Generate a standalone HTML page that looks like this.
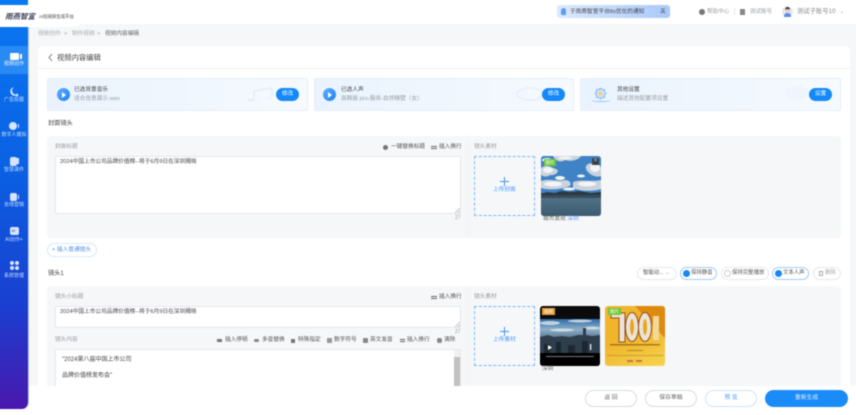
<!DOCTYPE html>
<html lang="zh">
<head>
<meta charset="utf-8">
<style>
html,body{margin:0;padding:0;width:856px;height:409px;overflow:hidden;background:#fff}
*{box-sizing:border-box}
#r{position:absolute;left:-6px;top:-6px;width:868px;height:421px;overflow:hidden;background:#fff;font-family:"Liberation Sans","Noto Sans CJK SC",sans-serif;font-size:5.7px;color:#555;filter:blur(.4px)}
#r div,#r span.t,#r svg{position:absolute}
#i{left:6px;top:6px;width:856px;height:409px}
.t{position:absolute;white-space:nowrap;line-height:8px}
.g{color:#9a9da3}
.d{color:#444}
.card{top:78px;height:33px;background:linear-gradient(90deg,#eaf3fd,#f6faff);border:1px solid #e6eef8;border-radius:2px}
.pbtn{top:88px;width:23px;height:13px;border-radius:7px;background:#1389fb;color:#fff;text-align:center;line-height:13px;font-size:5.7px}
.play{top:88px;width:13px;height:13px;border-radius:50%;background:linear-gradient(135deg,#62aefc,#1d80f0)}
.play:after{content:"";position:absolute;left:5px;top:3.5px;border-left:4px solid #fff;border-top:3px solid transparent;border-bottom:3px solid transparent}
.panel{left:47px;width:794px;background:#f5f7f9;border-radius:4px}
.ta{background:#fff;border:1px solid #e4e6ea;border-radius:1px}
.up{border:1px dashed #7ab6fb;border-radius:1px}
.side{left:0;width:28px;text-align:center;color:#c7dcff;font-size:5px;line-height:6px}
.ic{background:#d5e4ff;border-radius:2px}
.fb{top:390px;height:17px;border-radius:9px;border:1px solid #d9dbdf;background:#fff;text-align:center;line-height:15px;font-size:5.8px;color:#666}
.pill{top:267px;height:13px;border-radius:7px;background:#fff;border:1px solid #e6e8eb;line-height:11px;font-size:5.4px;color:#555;white-space:nowrap}
.chk{top:2px;left:2px;width:7px;height:7px;border-radius:50%;background:#1b86f2}
</style>
</head>
<body>
<div id="r"><div id="i">
  <!-- background content -->
  <div style="left:29px;top:24px;width:839px;height:362px;background:#f5f7f9"></div>

  <!-- sidebar -->
  <div style="left:-6px;top:0;width:35px;height:409px;background:linear-gradient(180deg,#0a78f2 0%,#0a62e4 40%,#1a3fd0 75%,#4a17ad 100%);border-radius:0 0 7px 0;border-right:1px solid #b9c9f6"></div>
  <div style="left:-6px;top:46px;width:34px;height:28px;background:#2a8af5"></div>
  <div style="left:10px;top:53px;width:9px;height:7px;background:#fff;border-radius:1px"></div>
  <div style="left:19.5px;top:54px;width:2px;height:5px;background:#fff"></div>
  <span class="t side" style="top:61px;color:#e6f1ff">视频创作</span>
  <svg style="left:9px;top:86px" width="11" height="11" viewBox="0 0 11 11"><path d="M5 1 A4.5 4.5 0 1 0 9.5 8 A4 4 0 0 1 5 1 Z" fill="#d5e4ff"/><circle cx="8" cy="9" r="1.3" fill="#d5e4ff"/></svg>
  <span class="t side" style="top:97px">广告投图</span>
  <div class="ic" style="left:9px;top:122px;width:8px;height:8px;border-radius:50%"></div>
  <div style="left:18px;top:124px;width:1px;height:4px;background:#d5e4ff"></div>
  <span class="t side" style="top:132px">数字人模拟</span>
  <div class="ic" style="left:10px;top:157px;width:7px;height:9px"></div>
  <div style="left:17px;top:158px;width:2px;height:6px;background:#d5e4ff"></div>
  <span class="t side" style="top:167px">智慧课件</span>
  <div class="ic" style="left:10px;top:193px;width:7px;height:8px"></div>
  <div style="left:18px;top:195px;width:1px;height:4px;background:#d5e4ff"></div>
  <span class="t side" style="top:202px">会场营销</span>
  <div class="ic" style="left:10px;top:227px;width:9px;height:8px"></div>
  <span class="t" style="left:11.5px;top:227px;font-size:4px;color:#1a50d8;line-height:8px">AI</span>
  <span class="t side" style="top:237px">AI创作+</span>
  <div class="ic" style="left:10px;top:261px;width:4px;height:4px"></div>
  <div class="ic" style="left:15px;top:261px;width:4px;height:4px"></div>
  <div class="ic" style="left:10px;top:266px;width:4px;height:4px"></div>
  <div class="ic" style="left:15px;top:266px;width:4px;height:4px"></div>
  <span class="t side" style="top:273px">系统管理</span>

  <!-- logo -->
  <div style="left:-6px;top:5px;width:88px;height:22px;background:#fff;border-radius:0 8px 8px 0"></div>
  <div style="left:-6px;top:-6px;width:34px;height:11px;background:#0a78f2"></div>
  <div style="left:28px;top:-6px;width:54px;height:11px;background:#fff"></div>
  <span class="t" style="left:5px;top:12px;font-size:7.5px;font-weight:bold;font-style:italic;color:#3a4358;line-height:10px">雨燕智宣</span>
  <span class="t" style="left:39px;top:13px;font-size:4.4px;color:#444">AI短视频生成平台</span>

  <!-- top right -->
  <div style="left:557px;top:5px;width:113px;height:13px;border-radius:3px;background:linear-gradient(90deg,#dce9fe,#a9c9fb)"></div>
  <div style="left:561px;top:8px;width:5px;height:7px;background:#5c9cf5;border-radius:3px 3px 1px 1px"></div>
  <span class="t" style="left:570px;top:8px;color:#444">于雨燕智宣平台tts优化的通知</span>
  <span class="t" style="left:660px;top:8px;color:#444">关</span>
  <div style="left:699px;top:9px;width:6px;height:6px;border-radius:50%;background:#777"></div>
  <span class="t g" style="left:707px;top:7.5px;font-size:5.6px">帮助中心</span>
  <div style="left:734px;top:8px;width:1px;height:7px;background:#e8e8e8"></div>
  <div style="left:740px;top:9px;width:5px;height:6px;background:#888"></div>
  <span class="t g" style="left:750px;top:7.5px;font-size:5.5px">测试账号</span>
  <div style="left:782px;top:6px;width:11px;height:11px;border-radius:50%;background:#e3e7f4;overflow:hidden"></div>
  <div style="left:785px;top:7px;width:5px;height:6px;border-radius:50%;background:#f0cfb6;border-top:2px solid #2c2c2c"></div>
  <div style="left:784px;top:13px;width:7px;height:4px;border-radius:3px 3px 0 0;background:#5b8cf0"></div>
  <span class="t" style="left:797px;top:8px;font-size:6.3px;color:#888">测试子账号10</span>
  <span class="t g" style="left:840px;top:8px;font-size:5px">⌄</span>

  <!-- breadcrumb -->
  <span class="t" style="left:38px;top:30px;color:#aaadb2">视频创作</span>
  <span class="t g" style="left:64px;top:30px">&gt;</span>
  <span class="t" style="left:72px;top:30px;color:#aaadb2">制作视频</span>
  <span class="t g" style="left:97px;top:30px">&gt;</span>
  <span class="t" style="left:105px;top:30px;color:#666">视频内容编辑</span>

  <!-- main card -->
  <div style="left:38px;top:46px;width:812px;height:350px;background:#fff;border-radius:5px 5px 0 0"></div>
  <div style="left:38px;top:68px;width:812px;height:1px;background:#eef0f3"></div>
  <svg style="left:47px;top:53px" width="7" height="9" viewBox="0 0 7 9"><path d="M5 1 L2 4.5 L5 8" fill="none" stroke="#666" stroke-width=".8"/></svg>
  <span class="t" style="left:57px;top:53px;font-size:7.3px;color:#444;line-height:9px">视频内容编辑</span>

  <!-- top cards -->
  <div class="card" style="left:47px;width:261px"></div>
  <div class="play" style="left:57px"></div>
  <span class="t d" style="left:74px;top:86px">已选背景音乐</span>
  <span class="t g" style="left:74px;top:95px">适合信息展示.wav</span>
  <svg style="left:246px;top:86px" width="30" height="17" viewBox="0 0 30 17"><path d="M8 13 V5 L26 2 V11" fill="none" stroke="#e6eff9" stroke-width="2"/><ellipse cx="5" cy="14" rx="4" ry="1.5" fill="#e6eff9"/><ellipse cx="23" cy="12" rx="4" ry="1.5" fill="#eef4fb"/></svg>
  <div class="pbtn" style="left:276px">修改</div>

  <div class="card" style="left:314px;width:260px"></div>
  <div class="play" style="left:323px"></div>
  <span class="t d" style="left:341px;top:86px">已选人声</span>
  <span class="t g" style="left:341px;top:95px">高精版 pro-服务-自然精壁（女）</span>
  <div style="left:516px;top:87px;width:28px;height:14px;border:2px solid #e9f0fa;border-radius:50%"></div>
  <div class="pbtn" style="left:542px">修改</div>

  <div class="card" style="left:580px;width:261px"></div>
  <div style="left:591px;top:99px;width:20px;height:3px;border-radius:50%;border-bottom:1px solid #8fc2f6"></div>
  <svg style="left:594px;top:87px" width="13" height="13" viewBox="0 0 13 13"><path d="M6.5 1 L8 2.5 L10.5 2.5 L10.5 5 L12 6.5 L10.5 8 L10.5 10.5 L8 10.5 L6.5 12 L5 10.5 L2.5 10.5 L2.5 8 L1 6.5 L2.5 5 L2.5 2.5 L5 2.5 Z" fill="#cfe4fb" stroke="#69aef3" stroke-width=".8"/><circle cx="6.5" cy="6.5" r="2" fill="#f6d06f"/></svg>
  <span class="t d" style="left:617px;top:86px">其他设置</span>
  <span class="t g" style="left:617px;top:95px">描述其他配置项设置</span>
  <div style="left:785px;top:86px;width:24px;height:14px;background:#eef5fd;border-radius:50%"></div>
  <div class="pbtn" style="left:809px">设置</div>

  <span class="t d" style="left:48px;top:120px;font-size:6.2px">封面镜头</span>

  <!-- panel 1 -->
  <div class="panel" style="top:136px;height:102px"></div>
  <div style="left:467px;top:136px;width:1px;height:102px;background:#eff1f4"></div>
  <span class="t g" style="left:55px;top:143px">封面标题</span>
  <div style="left:383px;top:145px;width:5px;height:5px;border-radius:50%;background:#777"></div>
  <span class="t" style="left:391px;top:143px">一键替换标题</span>
  <div style="left:431px;top:146px;width:6px;height:1px;background:#666;box-shadow:0 2px 0 #666"></div>
  <span class="t" style="left:439px;top:143px">插入换行</span>
  <div class="ta" style="left:55px;top:156px;width:406px;height:58px"></div>
  <span class="t d" style="left:60px;top:158px">2024中国上市公司品牌价值榜--将于6月9日在深圳揭晓</span>
  <svg style="left:455px;top:208px" width="5" height="5" viewBox="0 0 5 5"><path d="M0 5L5 0M3 5L5 3" stroke="#999" stroke-width=".6"/></svg>
  <span class="t g" style="left:455px;top:214px;font-size:5px">27</span>
  <span class="t g" style="left:474px;top:143px">镜头素材</span>
  <div class="up" style="left:474px;top:156px;width:61px;height:60px"></div>
  <div style="left:500px;top:181px;width:9px;height:1px;background:#3f95f6"></div>
  <div style="left:504px;top:177px;width:1px;height:9px;background:#3f95f6"></div>
  <span class="t" style="left:493px;top:186px;color:#4b9bf7">上传封面</span>

  <div style="left:541px;top:156px;width:60px;height:60px;border-radius:3px;overflow:hidden;background:#4a88c6">
    <svg style="left:0;top:0" width="60" height="60" viewBox="0 0 60 60">
      <defs><linearGradient id="w" x1="0" y1="0" x2="0" y2="1"><stop offset="0" stop-color="#4f7186"/><stop offset="1" stop-color="#3c5a70"/></linearGradient></defs>
      <rect width="60" height="40" fill="#3f82c6"/>
      <g fill="#c9d3dc">
        <path d="M0 12 C5 8 10 11 15 13 C20 15 14 20 9 19 C5 22 0 20 0 18 Z"/>
        <path d="M12 0 H40 C38 4 30 6 24 4 C20 7 14 5 12 0 Z"/>
        <path d="M47 8 C52 6 60 8 60 12 V20 C55 22 50 19 47 16 C44 13 44 10 47 8 Z"/>
        <path d="M0 25 C8 22 16 26 24 24 C30 24 32 30 26 31 C16 34 6 34 0 32 Z"/>
        <path d="M32 26 C40 23 50 26 60 24 V33 C50 36 38 35 32 32 Z"/>
      </g>
      <g fill="#f2f4f6">
        <ellipse cx="6" cy="4" rx="5" ry="2"/><ellipse cx="24" cy="2" rx="7" ry="1.5"/><ellipse cx="54" cy="12" rx="5" ry="4"/>
        <ellipse cx="7" cy="14" rx="5" ry="3"/><ellipse cx="19" cy="22" rx="5" ry="2"/><ellipse cx="40" cy="20" rx="4" ry="1.5"/>
        <ellipse cx="12" cy="28" rx="9" ry="2.5"/><ellipse cx="46" cy="28" rx="9" ry="2.5"/><ellipse cx="28" cy="33" rx="6" ry="1.5"/>
      </g>
      <path d="M0 37 H60 V42 H0 Z" fill="#3a4c58"/>
      <path d="M0 38 L6 36 L14 37 L20 35 L30 36 L38 35 L50 37 L60 36 V39 H0 Z" fill="#2a3943"/>
      <rect y="42" width="60" height="18" fill="url(#w)"/>
    </svg>
    <div style="left:3px;top:3px;width:12px;height:7px;background:#6ec93b;color:#fff;font-size:4.5px;line-height:7px;text-align:center">图片</div>
    <div style="left:51px;top:2px;width:7px;height:7px;background:#3c4247;color:#ddd;font-size:6px;line-height:7px;text-align:center;border-radius:1px">×</div>
  </div>
  <span class="t" style="left:543px;top:215px;color:#666">城市景观 <span style="color:#5b94f5">深圳</span></span>

  <div style="left:47px;top:243px;width:50px;height:14px;border:1px solid #d7e7fb;border-radius:7px;background:#fff"></div>
  <span class="t" style="left:52px;top:246px;color:#4f8ee8"><span style="color:#3f95f6">+</span> 插入普通镜头</span>

  <!-- shot 1 -->
  <span class="t d" style="left:48px;top:269.5px;font-size:6.2px">镜头1</span>
  <div class="pill" style="left:637px;width:40px;padding-left:5px">智能动... <span style="color:#aaa">⌄</span></div>
  <div class="pill" style="left:680px;width:37px;border-color:#9fcbfa;padding-left:10px"><div class="chk"></div>保持静音</div>
  <div class="pill" style="left:721px;width:48px;padding-left:10px"><div class="chk" style="background:#fff;border:1px solid #ccc"></div>保持完整播放</div>
  <div class="pill" style="left:772px;width:37px;border-color:#9fcbfa;padding-left:10px"><div class="chk"></div>文本人声</div>
  <div class="pill" style="left:813px;width:28px;padding-left:11px;color:#aaa"><div style="left:5px;top:3px;width:4px;height:5px;border:1px solid #aaa"></div>删除</div>

  <div class="panel" style="top:286px;height:105px"></div>
  <div style="left:467px;top:286px;width:1px;height:105px;background:#eff1f4"></div>
  <span class="t g" style="left:55px;top:293px">镜头小标题</span>
  <div style="left:431px;top:296px;width:6px;height:1px;background:#666;box-shadow:0 2px 0 #666"></div>
  <span class="t" style="left:439px;top:293px">插入换行</span>
  <div class="ta" style="left:55px;top:306px;width:406px;height:22px"></div>
  <span class="t d" style="left:60px;top:308px">2024中国上市公司品牌价值榜--将于6月9日在深圳揭晓</span>
  <svg style="left:455px;top:322px" width="5" height="5" viewBox="0 0 5 5"><path d="M0 5L5 0M3 5L5 3" stroke="#999" stroke-width=".6"/></svg>
  <span class="t g" style="left:455px;top:328px;font-size:5px">27</span>
  <span class="t g" style="left:55px;top:336px">镜头内容</span>
  <div style="left:217px;top:339px;width:5px;height:3px;background:#777"></div>
  <span class="t" style="left:225px;top:336px">插入停顿</span>
  <div style="left:254px;top:339px;width:5px;height:3px;background:#888;border-radius:2px"></div>
  <span class="t" style="left:262px;top:336px">多音替换</span>
  <div style="left:291px;top:339px;width:4px;height:4px;background:#777"></div>
  <span class="t" style="left:298px;top:336px">特殊指定</span>
  <div style="left:327px;top:338px;width:5px;height:5px;background:#999"></div>
  <span class="t" style="left:334px;top:336px">数字符号</span>
  <div style="left:363px;top:338px;width:5px;height:5px;background:#888;border-radius:1px"></div>
  <span class="t" style="left:370px;top:336px">英文发音</span>
  <div style="left:400px;top:339px;width:5px;height:1px;background:#666;box-shadow:0 2px 0 #666"></div>
  <span class="t" style="left:407px;top:336px">插入换行</span>
  <div style="left:437px;top:338px;width:5px;height:5px;border-radius:2px;background:#888"></div>
  <span class="t" style="left:444px;top:336px">清除</span>

  <div class="ta" style="left:55px;top:349px;width:406px;height:45px"></div>
  <span class="t d" style="left:62px;top:356px;font-size:6px">"2024第八届中国上市公司</span>
  <span class="t d" style="left:62px;top:372px;font-size:6px">品牌价值榜发布会"</span>
  <div style="left:454px;top:350px;width:6px;height:44px;background:#f1f1f1"></div>
  <div style="left:454px;top:357px;width:6px;height:35px;background:#c1c1c1"></div>

  <span class="t g" style="left:474px;top:293px">镜头素材</span>
  <div class="up" style="left:474px;top:306px;width:61px;height:60px"></div>
  <div style="left:500px;top:331px;width:9px;height:1px;background:#3f95f6"></div>
  <div style="left:504px;top:327px;width:1px;height:9px;background:#3f95f6"></div>
  <span class="t" style="left:493px;top:336px;color:#4b9bf7">上传素材</span>

  <div style="left:540px;top:306px;width:60px;height:60px;border-radius:3px;overflow:hidden;background:#0b0b0b">
    <svg style="left:0;top:0" width="60" height="60" viewBox="0 0 60 60">
      <defs><linearGradient id="c" x1="0" y1="0" x2="0" y2="1"><stop offset="0" stop-color="#2f6aa6"/><stop offset=".55" stop-color="#8fb0c9"/><stop offset="1" stop-color="#5a7a94"/></linearGradient></defs>
      <rect y="13" width="60" height="19" fill="url(#c)"/>
      <g fill="#e3ebf0" opacity=".75"><ellipse cx="10" cy="17" rx="10" ry="2"/><ellipse cx="40" cy="15" rx="12" ry="1.5"/><ellipse cx="22" cy="24" rx="12" ry="1.5"/><ellipse cx="52" cy="22" rx="8" ry="1.5"/></g>
      <path d="M0 31 L8 29 L14 31 L22 30 L30 31 L38 29 L43 29 L43 22 L46 22 L46 29 L52 30 L60 29 V47 H0 Z" fill="#2f3e4d"/>
      <g fill="#1c2730"><rect x="4" y="38" width="6" height="9"/><rect x="16" y="36" width="5" height="11"/><rect x="28" y="39" width="7" height="8"/><rect x="42" y="35" width="6" height="12"/></g>
      <rect y="47" width="60" height="13" fill="#000"/>
      <path d="M8 39 L12 41.5 L8 44 Z" fill="#fff"/>
      <rect x="50" y="38" width="1.2" height="6" fill="#fff"/>
      <rect x="6" y="50" width="48" height="1" fill="#777"/>
    </svg>
    <div style="left:2px;top:2px;width:13px;height:7px;background:#e79e3c;color:#fff;font-size:4.5px;line-height:7px;text-align:center">视频</div>
  </div>
  <span class="t" style="left:542px;top:365px;color:#666">深圳</span>

  <div style="left:605px;top:306px;width:60px;height:60px;border-radius:3px;overflow:hidden;background:linear-gradient(160deg,#f1b52c 0%,#efb52c 50%,#f5d54f 100%)">
    <svg style="left:0;top:0" width="60" height="60" viewBox="0 0 60 60">
      <path d="M30 0 L60 0 L60 32 Z" fill="#dd8a0e"/>
      <path d="M6 7 H20 V36 H14 V12 H6 Z" fill="#e9e4d5" stroke="#9d4c1a" stroke-width="1"/>
      <ellipse cx="27" cy="21" rx="6.5" ry="14.5" fill="#e9e4d5" stroke="#9d4c1a" stroke-width="1"/>
      <ellipse cx="27" cy="21" rx="2" ry="8" fill="#e8a622"/>
      <ellipse cx="40" cy="21" rx="6.5" ry="14.5" fill="#e9e4d5" stroke="#9d4c1a" stroke-width="1"/>
      <ellipse cx="40" cy="21" rx="2" ry="8" fill="#e8a622"/>
      <rect x="48" y="10" width="6" height="24" fill="#f2d99a"/>
      <rect x="5" y="38" width="50" height="1.5" fill="#8a5a10" opacity=".7"/>
      <rect x="22" y="44" width="16" height="1" fill="#8a5a10" opacity=".6"/>
      <rect x="2" y="49" width="56" height="1" fill="#a67a20" opacity=".5"/>
      <rect x="22" y="54" width="6" height="2" fill="#b5534a" opacity=".7"/>
      <rect x="31" y="54" width="6" height="2" fill="#b5534a" opacity=".7"/>
    </svg>
    <div style="left:3px;top:2px;width:13px;height:7px;background:#6ec93b;color:#fff;font-size:4.5px;line-height:7px;text-align:center">图片</div>
  </div>

  <!-- footer -->
  <div style="left:29px;top:386px;width:839px;height:29px;background:#fff"></div>
  <div class="fb" style="left:585px;width:52px">返 回</div>
  <div class="fb" style="left:645px;width:52px">保存草稿</div>
  <div class="fb" style="left:705px;width:52px;color:#4b9bf7;border-color:#cfe4fb">预 览</div>
  <div class="fb" style="left:765px;width:83px;background:#1b8bf8;border-color:#1b8bf8;color:#e8f3ff">重新生成</div>
</div></div>
</body>
</html>
